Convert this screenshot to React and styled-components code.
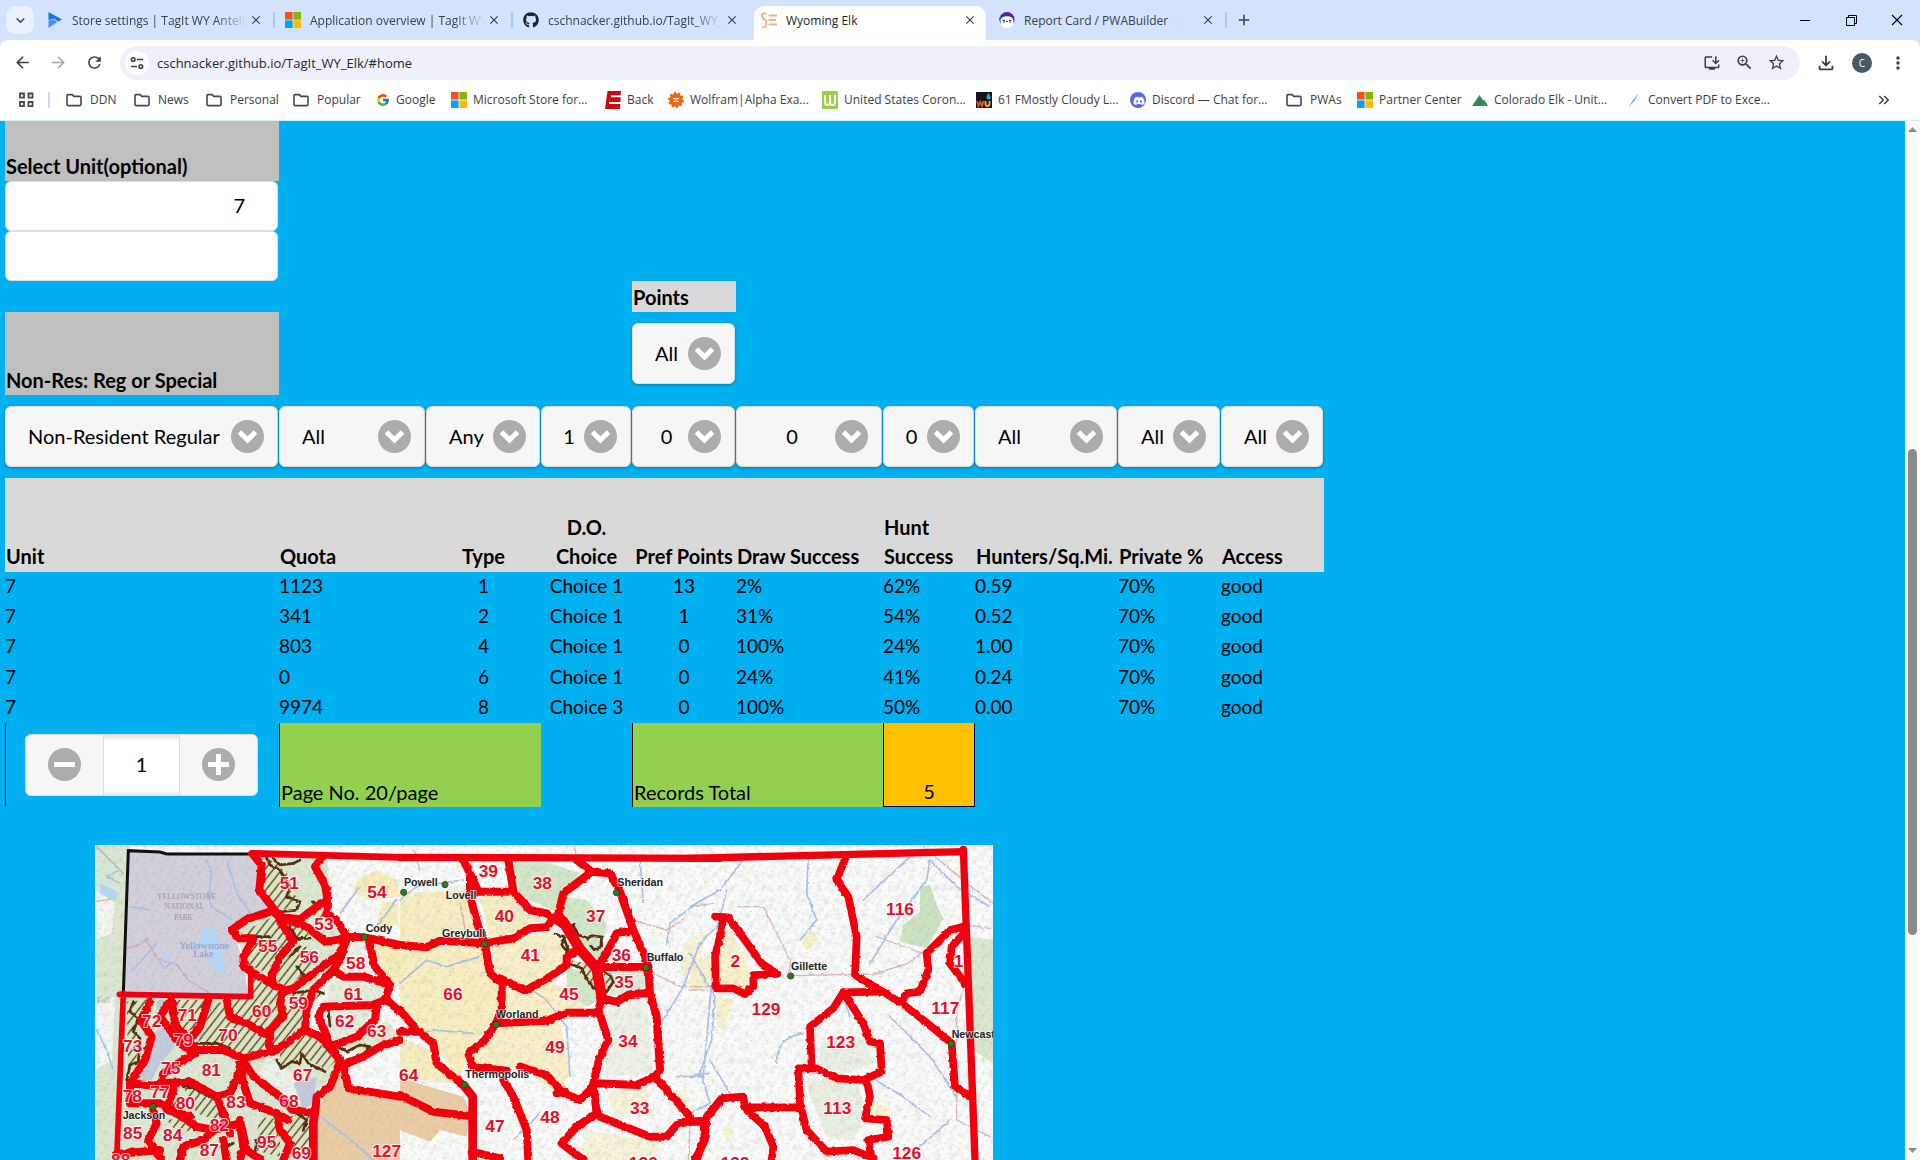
import React from "react";
import styled, { createGlobalStyle, css } from "styled-components";
import { FcGoogle } from "react-icons/fc";
import { FaGithub, FaDiscord } from "react-icons/fa";
import {
    MdArrowBack,
    MdArrowForward,
    MdRefresh,
    MdStarBorder,
    MdZoomIn,
    MdMoreVert,
    MdClose,
    MdAdd,
    MdKeyboardArrowDown,
    MdOutlineInstallDesktop,
    MdKeyboardDoubleArrowRight,
    MdOutlineFileDownload,
} from "react-icons/md";

const GlobalStyle = createGlobalStyle`
    * {
        box-sizing: border-box;
    }
    body {
        margin: 0;
        overflow: hidden;
        background: #00b0f0;
    }
    button, input, select {
        font: inherit;
        color: inherit;
        margin: 0;
    }
`;

const uiFont = `"Open Sans", "Noto Sans", sans-serif`;
const sheetFont = `Lato, "Liberation Sans", sans-serif`;
const columns = [274, 147, 115, 91, 104, 147, 92, 143, 103, 103];
const template = columns.map((c) => `${c}px`).join(" ");

/* ---------- browser window ---------- */

const Window = styled.div`
    display: flex;
    flex-direction: column;
    height: 100vh;
    font-family: ${uiFont};
    font-size: 12px;
    color: #3c4043;
`;

const TabStrip = styled.header`
    display: flex;
    align-items: center;
    flex: none;
    height: 40px;
    padding-left: 6px;
    background: #d3e3fd;
`;

const IconButton = styled.button`
    display: flex;
    align-items: center;
    justify-content: center;
    flex: none;
    width: ${(props) => props.$width || "36px"};
    height: 28px;
    padding: 0;
    border: none;
    border-radius: 10px;
    background: ${(props) => props.$bg || "none"};
    color: ${(props) => props.$color || "#3c4043"};
`;

const TabSearch = styled(IconButton)`
    margin-right: 3px;
`;

const Tab = styled.div`
    position: relative;
    display: flex;
    align-items: center;
    flex: 0 1 238px;
    min-width: 0;
    height: 34px;
    margin-top: 6px;
    padding: 0 ${(props) => (props.$line ? "8px" : "10px")} 6px 10px;
    border-right: ${(props) => (props.$line ? "2px solid #a8c7fa" : "none")};
    border-image: linear-gradient(transparent 20%, #a8c7fa 20%, #a8c7fa 65%, transparent 65%) 1;
    ${(props) =>
        props.$active &&
        css`
            color: #1f1f1f;
            &:before {
                content: "";
                position: absolute;
                z-index: 0;
                inset: 0 3px;
                border-radius: 10px 10px 0 0;
                background: #fff;
            }
        `}
    > * {
        position: relative;
    }
`;

const TabTitle = styled.span`
    flex: 1;
    min-width: 0;
    margin-left: 9px;
    white-space: nowrap;
    mask-image: ${(props) => (props.$fade ? "linear-gradient(90deg, #000 82%, transparent)" : "none")};
`;

const WindowButtons = styled.div`
    display: flex;
    margin-left: auto;
    color: #000;
`;

const Toolbar = styled.div`
    display: flex;
    align-items: center;
    height: 41px;
    padding: 4px 4px 0 4px;
    background: #fff;
    border-radius: 8px 8px 0 0;
`;

const ToolbarBack = styled.div`
    flex: none;
    background: #d3e3fd;
`;

const AddressBar = styled.div`
    display: flex;
    align-items: center;
    flex: 1;
    height: 34px;
    margin: 0 8px;
    padding: 0 8px 0 5px;
    border-radius: 17px;
    background: #ecf1fa;
`;

const SiteInfo = styled(IconButton)`
    height: 24px;
    border-radius: 12px;
`;

const Address = styled.input`
    flex: 1;
    min-width: 0;
    padding: 0 8px;
    border: none;
    outline: none;
    background: none;
    font-size: 13px;
    color: #26282b;
`;

const Avatar = styled.span`
    display: flex;
    align-items: center;
    justify-content: center;
    width: 20px;
    height: 20px;
    border-radius: 50%;
    background: #455a64;
    color: #fff;
    font-size: 10px;
`;

const Bookmarks = styled.nav`
    display: flex;
    align-items: center;
    flex: none;
    height: 40px;
    padding: 0 26px 2px 16px;
    border-bottom: 1px solid #d5eef8;
    background: #fff;
`;

const Divider = styled.span`
    width: 2px;
    height: 16px;
    margin: 0 16px 0 12px;
    background: #c9defb;
`;

const Bookmark = styled.a`
    display: flex;
    align-items: center;
    flex: 0 0 ${(props) => props.$width}px;
    gap: ${(props) => (props.$folder ? "8px" : "6px")};
    color: inherit;
    text-decoration: none;
    white-space: nowrap;
    font-size: 12px;
`;

const More = styled(IconButton)`
    margin-left: auto;
    width: 20px;
`;

/* ---------- sheet ---------- */

const Viewport = styled.main`
    display: flex;
    flex: 1;
    min-height: 0;
    overflow: hidden;
    background: #00b0f0;
`;

const Sheet = styled.form`
    flex: 1;
    min-width: 0;
    overflow: hidden;
    padding-left: 5px;
    font-family: ${sheetFont};
    font-size: 20px;
    line-height: 28px;
    color: #000;
`;

const SheetGrid = styled.div`
    display: grid;
    grid-template-columns: ${template};
`;

const Caption = styled.label`
    display: flex;
    align-items: flex-end;
    grid-column: ${(props) => props.$column || 1};
    height: ${(props) => props.$height};
    padding: 0 0 1px 1px;
    background: ${(props) => props.$bg || "#bfbfbf"};
    font-weight: bold;
`;

const UnitInput = styled.input`
    display: block;
    width: 273px;
    height: 50px;
    padding: 0 32px 3px;
    border: 1px solid #ddd;
    border-radius: 6px;
    background: #fff;
    text-align: right;
`;

const SelectBox = styled.div`
    display: grid;
    align-items: center;
    grid-column: ${(props) => props.$column || "auto"};
    height: 61px;
    margin: 11px 1px 11px 0;
    svg {
        grid-area: 1 / 1;
        justify-self: end;
        margin-right: 14px;
        pointer-events: none;
    }
`;

const SelectInput = styled.select`
    grid-area: 1 / 1;
    width: 100%;
    height: 61px;
    padding: 0 ${(props) => (props.$align === "center" ? "52px" : "40px")} 2px
        ${(props) => (props.$align === "center" ? "18px" : "22px")};
    border: 1px solid #ddd;
    border-radius: 6px;
    background: #f6f6f6;
    box-shadow: 0 1px 3px rgba(0, 0, 0, 0.3);
    appearance: none;
    text-align: ${(props) => props.$align || "left"};
`;

const Records = styled.table`
    width: 1319px;
    table-layout: fixed;
    border-collapse: collapse;
    th {
        height: 94px;
        padding: 0 1px 1px;
        background: #d9d9d9;
        vertical-align: bottom;
        white-space: pre;
        line-height: 29px;
    }
    td {
        height: 30px;
        padding: 0;
        vertical-align: top;
        font-size: 19px;
    }
    tr:nth-child(3) td {
        height: 31px;
    }
`;

const HeadCell = styled.th`
    text-align: ${(props) => props.$align || "left"};
`;

const Cell = styled.td`
    text-align: ${(props) => props.$align || "left"};
`;

const Footer = styled(SheetGrid)`
    height: 84px;
    margin-bottom: 38px;
`;

const FooterCell = styled.div`
    display: flex;
    align-items: flex-end;
    justify-content: ${(props) => (props.$total ? "center" : "flex-start")};
    grid-column: ${(props) => props.$column};
    padding: 0 1px 1px;
    border: 0 solid #000;
    border-width: ${(props) => (props.$total ? "0 1px 1px 1px" : "0 0 0 1px")};
    background: ${(props) => props.$bg || "none"};
`;

const Stepper = styled.div`
    display: flex;
    align-self: center;
    width: 233px;
    height: 62px;
    margin-left: 18px;
    overflow: hidden;
    border: 1px solid #ddd;
    border-radius: 6px;
    background: #f6f6f6;
`;

const StepButton = styled.button`
    display: flex;
    align-items: center;
    justify-content: center;
    flex: 1;
    padding: 0;
    border: none;
    background: none;
`;

const StepInput = styled.input`
    width: 77px;
    padding: 0 0 2px;
    border: 1px solid #ddd;
    border-width: 0 1px;
    background: #fff;
    box-shadow: inset 0 7px 3px -3px #e8e8e8, inset 0 -6px 3px -3px #ececec;
    text-align: center;
`;

const MapFigure = styled.figure`
    width: 898px;
    margin: 0 0 0 90px;
    svg {
        display: block;
        width: 100%;
    }
`;

const ScrollTrack = styled.div`
    display: flex;
    flex-direction: column;
    align-items: center;
    flex: 0 0 15px;
    padding: 6px 0 7px;
    background: #fcfcfc;
`;

const ScrollThumb = styled.div`
    flex: 486;
    width: 9px;
    border-radius: 5px;
    background: #8b8b8b;
`;

const ScrollSpace = styled.div`
    flex: ${(props) => props.$grow};
`;

/* ---------- small icons ---------- */

const Folder = () => (
    <svg width="16" height="16" viewBox="0 0 16 16" fill="none" stroke="#474747" strokeWidth="1.6">
        <path d="M1 3.6q0-1 1-1h4.2l1.7 1.8H14q1 0 1 1v7.2q0 1-1 1H2q-1 0-1-1z" />
    </svg>
);

const Microsoft = () => (
    <svg width="16" height="16" viewBox="0 0 16 16">
        <path d="M0 0h7.6v7.6H0z" fill="#f25022" />
        <path d="M8.4 0H16v7.6H8.4z" fill="#7fba00" />
        <path d="M0 8.4h7.6V16H0z" fill="#00a4ef" />
        <path d="M8.4 8.4H16V16H8.4z" fill="#ffb900" />
    </svg>
);

const StoreIcon = () => (
    <svg width="16" height="16" viewBox="0 0 16 16">
        <path d="M1.5 0 15 7.5 11 9.6 7 6.5 1.5 8.2z" fill="#1f6fe0" />
        <path d="M1.5 8.8 6.8 7.2l3.4 2.9L1.5 16z" fill="#3b94f2" />
    </svg>
);

const ElkIcon = () => (
    <svg width="16" height="16" viewBox="0 0 16 16" stroke="#efb48c" strokeWidth="2" fill="none">
        <path d="M5.5 2Q4 .8 2 1.6T1.3 5t3 3 .7 5-4 1.4" />
        <path d="M7.5 3.5H16M7.5 8H15M7.5 12.5H16" />
    </svg>
);

const PwaIcon = () => (
    <svg width="16" height="16" viewBox="0 0 16 16">
        <circle cx="8" cy="7.5" r="7.5" fill="#5122a5" />
        <path d="M0 8a8 8 0 0 1 2-5l1 8z" fill="#1f6bd8" />
        <path d="M1.6 8Q3 4 8 4.4 13 4 14.4 8q.6 8-6.4 8T1.6 8z" fill="#fff" />
        <path d="M3.5 8.400h2.500M10 8.400h2.500M4 10h2M10 10h2M7 9.400h2" stroke="#35364a" />
    </svg>
);

const BackIcon = () => (
    <svg width="16" height="18" viewBox="0 0 16 18">
        <path d="M2.500 0H16l-1 18H0z" fill="#cc0b10" />
        <path d="M6 5.200h10M4 12h12" stroke="#fff" strokeWidth="2" />
    </svg>
);

const WolframIcon = () => (
    <svg width="16" height="16" viewBox="0 0 16 16">
        <circle cx="8" cy="8" r="6.600" fill="#f3650b" stroke="#f3650b" strokeWidth="2.600" strokeDasharray="2.300 1.800" />
        <circle cx="8" cy="8" r="5.800" fill="#f3650b" />
        <path d="M5 6.600h6M5 9.400h6" stroke="#fff" strokeWidth="1.400" />
    </svg>
);

const WorldIcon = () => (
    <svg width="16" height="18" viewBox="0 0 16 18">
        <rect width="16" height="18" rx="1" fill="#9ccf4c" />
        <path d="M3 4v7q0 3 2.500 3T8 11V4v7q0 3 2.500 3T13 11V4" fill="none" stroke="#fff" strokeWidth="1.800" />
    </svg>
);

const WeatherIcon = () => (
    <svg width="16" height="16" viewBox="0 0 16 16">
        <rect width="16" height="16" fill="#15191d" />
        <path d="m1 9 1.500 5 1.800-4 1.700 4L7.500 9" fill="none" stroke="#e8502a" strokeWidth="1.800" />
        <path d="M9.500 9v3q0 2 2 2t2-2V9" fill="none" stroke="#f7b32b" strokeWidth="1.800" />
        <path d="M12.500 1q2.500 3.500 2 5t-2 1.500-2-1.500 2-5z" fill="#2fa4e8" />
    </svg>
);

const DiscordIcon = () => (
    <svg width="16" height="16" viewBox="0 0 16 16">
        <circle cx="8" cy="8" r="8" fill="#5865f2" />
        <FaDiscord x="3" y="3" width="10" height="10" color="#fff" />
    </svg>
);

const ColoradoIcon = () => (
    <svg width="16" height="16" viewBox="0 0 16 16">
        <path d="M0 14 7.500 3l3.500 5.500L12.500 8 16 14h-2.500l-2-3L13 14z" fill="#2e8b57" />
    </svg>
);

const ConvertIcon = () => (
    <svg width="16" height="16" viewBox="0 0 16 16">
        <path d="M2.500 15.500 6 9.500 12.500.8 9 8z" fill="#3cb9e2" />
    </svg>
);

const AppsIcon = () => (
    <svg width="16" height="16" viewBox="0 0 16 16" fill="none" stroke="#474747" strokeWidth="1.800">
        <path d="M2 1.500h4v4.200H2zM10.500 1.500h4v4.200h-4zM2 10h4v4.200H2zM10.500 10h4v4.200h-4z" />
    </svg>
);

const TuneIcon = () => (
    <svg width="14" height="14" viewBox="0 0 14 14" fill="none" stroke="#3c4043" strokeWidth="1.600">
        <circle cx="3.200" cy="3.500" r="1.800" />
        <path d="M7 3.500h6M1 10.500h6" />
        <circle cx="10.800" cy="10.500" r="1.800" />
    </svg>
);

const MinimizeIcon = () => (
    <svg width="11" height="11" viewBox="0 0 11 11" stroke="#000">
        <path d="M0 5.500h10" />
    </svg>
);

const RestoreIcon = () => (
    <svg width="11" height="11" viewBox="0 0 11 11" fill="none" stroke="#000">
        <path d="M.5 2.500h8v8h-8zM2.500 2.500v-2h8v8h-2" />
    </svg>
);

const CloseIcon = () => (
    <svg width="12" height="12" viewBox="0 0 12 12" stroke="#000" strokeWidth="1.200">
        <path d="m1 1 10 10M11 1 1 11" />
    </svg>
);

const RoundIcon = ({ d }) => (
    <svg width="33" height="33" viewBox="0 0 33 33" fill="none" stroke="#fff" strokeWidth="5">
        <circle cx="16.500" cy="16.500" r="16.500" fill="#acacac" stroke="none" />
        <path d={d} />
    </svg>
);

const ScrollArrow = ({ down }) => (
    <svg width="9" height="5" viewBox="0 0 9 5" fill="#8b8b8b">
        <path d={down ? "M0 0h9L4.500 5z" : "M0 5h9L4.500 0z"} />
    </svg>
);

/* ---------- data ---------- */

const tabs = [
    { title: "Store settings | TagIt WY Antelo", icon: <StoreIcon />, fade: true, line: true },
    { title: "Application overview | TagIt WY", icon: <Microsoft />, fade: true, line: true },
    { title: "cschnacker.github.io/TagIt_WY_", icon: <FaGithub size={16} color="#1f2328" />, fade: true },
    { title: "Wyoming Elk", icon: <ElkIcon />, active: true },
    { title: "Report Card / PWABuilder", icon: <PwaIcon />, line: true },
];

const bookmarks = [
    ["DDN", 68],
    ["News", 72],
    ["Personal", 87],
    ["Popular", 83],
    ["Google", 75, <FcGoogle size={14} />],
    ["Microsoft Store for...", 154, <Microsoft />],
    ["Back", 63, <BackIcon />],
    ["Wolfram|Alpha Exa...", 154, <WolframIcon />],
    ["United States Coron...", 154, <WorldIcon />],
    ["61 FMostly Cloudy L...", 154, <WeatherIcon />],
    ["Discord — Chat for...", 156, <DiscordIcon />],
    ["PWAs", 71],
    ["Partner Center", 115, <Microsoft />],
    ["Colorado Elk - Unit...", 154, <ColoradoIcon />],
    ["Convert PDF to Exce...", 150, <ConvertIcon />],
];

const filters = [
    ["Residency", "Non-Resident Regular"],
    ["Quota", "All"],
    ["Type", "Any"],
    ["D.O. choice", "1", "center"],
    ["Pref points", "0", "center"],
    ["Draw success", "0", "center"],
    ["Hunt success", "0", "center"],
    ["Hunters per square mile", "All"],
    ["Private", "All"],
    ["Access", "All"],
];

const heads = [
    "Unit",
    "Quota",
    "Type",
    "D.O.\nChoice",
    "Pref Points",
    "Draw Success",
    "Hunt\nSuccess",
    "Hunters/Sq.Mi.",
    "Private %",
    "Access",
];

const rows = [
    ["7", "1123", "1", "Choice 1", "13", "2%", "62%", "0.59", "70%", "good"],
    ["7", "341", "2", "Choice 1", "1", "31%", "54%", "0.52", "70%", "good"],
    ["7", "803", "4", "Choice 1", "0", "100%", "24%", "1.00", "70%", "good"],
    ["7", "0", "6", "Choice 1", "0", "24%", "41%", "0.24", "70%", "good"],
    ["7", "9974", "8", "Choice 3", "0", "100%", "50%", "0.00", "70%", "good"],
];

const align = (i) => (i > 1 && i < 5 ? "center" : "left");

/* ---------- hunt area map, three panels: west, middle, east ---------- */

const panels = [-45, 915, 1785];

const land = [
    [
        ["#dbe7d0", "M45 45H145L110 990H45z"],
        ["#f5f6f4", "M45 180l60 40-10 90-50 20zM45 520l60-20-8 190-52 30z"],
        ["#dde8d2", "M525 80H740L760 280 800 320 780 430 700 480 690 590 780 690 700 850V990H110L130 500H510V420L460 300 590 240z"],
        ["#d3cfdb", "M145 65 515 72 545 105 540 180 575 235 460 300 490 400 505 495H130z"],
        ["#f8edbb", "M830 150l60-30 60 30 10 50-90 10-50-20zM880 340l80 10V470l-50-40zM905 215l50 5v60l-70 25z"],
        ["#e8ecdc", "M750 450 920 470 900 520 740 530zM740 540H880L830 620 760 640z"],
        ["#eef0ea", "M800 340 860 335 880 430 770 430zM560 680 680 760 710 800 640 830 540 730z"],
        ["#dfeAd0", "M800 650 920 570 960 620 850 680z"],
        ["#ebcba3", "M780 710 805 780 960 805V990H705L715 830 750 770z"],
        ["#c3c9de", "M215 610l50-20 20 60-50 60-20 40h-40l25-60zM230 510h30v30h-30zM640 760l70-20-10 80-30 20z"],
    ],
    [
        ["#f8eec4", "M0 190 210 180 240 290 255 340 0 350zM240 200 340 190 420 260 400 290 270 330z"],
        ["#f9eec0", "M0 360 255 345 300 450 300 540 200 670 180 750 100 640 0 530zM0 620 90 660 110 700 190 765 0 740z"],
        ["#f9f0c8", "M275 350 440 305 490 330 500 380 470 430 370 480 290 440zM300 460 450 450 560 540 440 570 300 560z"],
        ["#f9f0c8", "M290 590 480 570 510 730 470 790 360 710 220 710 205 670z"],
        ["#d2e7c8", "M325 95 450 100 540 130 480 250 340 190zM490 200 560 210 620 280 600 400 520 360 480 260zM500 410 590 440 600 510 560 530 500 490zM620 540l40 0-5 40-25-5z"],
        ["#e2ebd9", "M340 200 470 270 440 290 360 250zM620 430 740 420 740 480 620 500z"],
        ["#eef2e9", "M600 520 740 510 760 730 620 740z"],
        ["#ebcba3", "M0 745 190 800 210 850 200 920 120 900 90 935 0 900z"],
        ["#f8f3da", "M620 790 740 770 760 860 640 850zM560 900 780 940 760 990H540zM850 340l70-40-20 120-60 20zM820 780l40 0 10 70-30-10z"],
    ],
    [
        ["#f7f1cc", "M0 400 60 380 70 470 0 480zM85 300 120 300 180 420 170 480 90 460zM80 500l50 10-30 90-20-10zM330 330l30-30 30 30-40 30zM100 890l30 0-20 50zM540 820l60 10-10 40-40 0z"],
        ["#cbe3c1", "M690 170l30-5 20 60 20 40-50 90-80-20 10-50 50-40z"],
        ["#dbe8cf", "M830 320l79 10V700l-60-40z"],
        ["#eaf0e4", "M350 740l150 20 30 80-40 90-80-10-50-120zM400 620l120 0 30 80-80 30-90-20z"],
    ],
];

const hatches = [
    ["M560 85 590 100 640 150 620 170 660 210 620 240 580 230 545 170z",
     "M590 255 640 330 575 435 490 400 520 335 480 310z",
     "M620 275 680 285 690 330 640 320zM690 250 730 210 740 280z",
     "M650 350 690 350 700 400 650 450 620 475 585 450 610 380z",
     "M520 430 610 480 600 550 570 610 460 570 440 510 510 505z",
     "M270 510H380L355 590 310 610 280 560zM400 520 440 515 450 560 570 620 575 660 480 680 350 650 370 590z",
     "M640 485 730 490 690 520 680 590 580 660 570 610 610 560z",
     "M600 660 680 600 770 690 740 720 670 680 600 710z",
     "M140 515 200 510 170 570 170 700 145 720z",
     "M310 770 410 800 440 880 350 850zM250 800 310 800 280 830zM260 870 330 860 360 900 290 905z",
     "M620 860 690 850 690 950 640 980 620 930zM540 860 600 870 600 980 520 960z"],
    ["M510 390 560 400 600 450 600 480 570 470zM490 310 540 320 520 350zM610 430 640 440 620 480z"],
    [],
];

const ridges = [
    "M560 85l10 20 30 15 30 50-10 30 40 15-10 25-40 5M580 85l20 20 40-5 20-10M510 320l60 0M630 290l20 35 40 0M660 350l-30 30M650 410l20 25-15 25M700 215l20 20M590 690l15 25 30-20 25 5 5-30 20 30 50 25M160 515l-10 30 25 20-15 40 20 20-5 70-25 10-10 45M770 650l30 15 40-20 30 5-20 25-50 15M640 490l60-10 30 10M350 640l60 0 40 15M310 770l30 5 60 30M650 850l30 20-10 30M460 940l-20 10M530 930l-5 40 20 10M745 540l5 50",
    "M465 312l30 8-10 25 25 30-5 25 40 15 15 30 20 30 25-5M500 290l20-5 15 30 30 10 10-8 30 4-3 30-20 8-10-12M575 410l55 25 10 20-20 30-20-6M490 320l15 40",
    "",
];

const rivers = [
    ["M380 90l15 40-10 70 10 30 60 40M440 90l30 100 50 70M150 230l60 10M60 60l60 60-40 20 40 20M50 600l30 60 20 60M160 420l70-80M260 370l-20 30 15 15 20-20M720 860l80 60 80 70M400 350l5 60M780 250l60-80M890 290l60-80"],
    ["M0 460l80-70 60 20 100-30M20 620l80-20 120 10M0 210l50-40 140-20M380 470l60 40 60 80 10 150M790 570l60-100 50-130 60-60M960 250l-20 150-30 340-80 0M720 90l10 130M800 340l10-60 80-60M900 720l30 100-60 30M420 850l-80 80"],
    ["M160 90l-70 90-90 50M355 80l-5 110 30 80-50 60M110 180l-20 80M0 370l75 130-10 130-40 110M720 90l-10 60-90 120-80 130M660 80l-140 130M720 90l80 80 100 60M480 560l-20-60M600 560l120 120 80 120M260 700q0-80 80-90M0 740l60-10M60 690l60 100M540 740l100 60 80 60M780 870l-90 80"],
];

const roads = [
    "M45 215l60-10M140 355l40-10 20-20 30 60 60 20 40 50 70 40M50 50l80 80",
    "M40 60l20 60M700 270l100 30 50-30M740 420l100 50 90 0M870 880l-5 110M520 50l30 60M180 220l20 100",
    "M0 480l40 0M140 230l80 0 30 60 50 100 0 45M300 437l250-5 100-30 80-60M830 285l70 10M700 50l130 110 79 60M800 640l0-100 20-60M0 230l70-10M800 780l0 90 100 50M560 320l80 30 60 20",
];

const borders = [
    [
        [20, "M515 70 960 82"],
        [17, "M118 493 512 500V415M130 490 110 990"],
        [24, "M520 75 545 105 538 180 580 235 600 262 M725 85 705 110 735 165 742 205 690 245 660 268 600 262 M600 252 570 245 500 268 455 300 475 325 520 325 M520 328 490 380 492 412 580 465 615 480 M742 180 740 250 770 270 800 320 853 322 960 345 M600 262 680 290 735 335 800 325 M590 255 640 335 600 380 575 440 580 465"],
        [24, "M800 325 780 370 700 430 640 475 610 485 M800 325 780 390 760 420 790 440 850 440 930 465 M865 325 885 410 930 465 915 510 880 525 730 530 715 560 750 640 780 690 M760 420 740 440 700 480 680 540 675 598 620 640 575 665 M890 530 885 570 830 620 765 645 M915 505 960 545 M960 630 900 650 850 680 790 705 M610 485 600 520 610 560 570 600 565 640 580 665"],
        [24, "M440 510 450 560 500 580 570 620 M385 510 360 590 330 630 M275 505 285 580 320 625 M330 640 350 660 430 660 490 685 570 665 M210 515 183 570 215 620 195 690 150 760 M265 520 240 560 300 640 345 670 310 690 250 730 245 760 M250 760 330 755 410 800 450 790 485 710 M485 685 520 740 600 800 640 840 705 850 710 800 750 770 780 695 M675 600 720 620 780 690"],
        [24, "M480 700 490 760 510 820 590 850 625 870 M410 800 430 850 450 910 M150 760 250 770 290 760 M150 760 150 820 240 820 290 850 350 890 400 900 480 880 490 950 480 990 M280 780 260 840 330 860 M220 840 230 880 205 930 245 990 M110 972 240 960 M300 990 310 950 370 930 400 900 M430 930 440 990 M590 850 600 900 630 940 610 990 M480 870 500 960 540 990 M790 705 805 775 960 800"],
        [26, "M705 840 700 880 700 990"],
    ],
    [
        [22, "M0 82 960 85"],
        [24, "M190 90 215 140 235 185 340 185 325 90 M210 140 210 200 235 290 255 340 M340 185 390 240 440 250 490 285 M255 340 340 325 390 295 440 292 460 265 M300 445 375 482 450 440 500 405 500 380 540 358 M530 90 575 125 490 190 475 250 500 290 M575 125 630 130 660 185 700 300 735 380 745 410 M700 300 650 310 620 370 600 400 M605 412 740 410"],
        [32, "M490 275 540 358 590 415 605 500"],
        [24, "M0 345 80 352 120 332 255 340 270 430 305 460 305 540 288 580 M745 410 750 490 690 492 650 515 600 505 M288 580 440 572 500 548 595 548 M605 505 595 540 625 630 600 680 580 760 590 850 M750 490 770 560 780 720 765 740 710 765 590 760"],
        [24, "M288 580 255 630 205 670 220 712 320 722 M360 710 440 735 490 790 540 810 580 770 M470 790 495 785 M0 540 50 600 100 640 110 700 190 765 M0 605 60 605 M0 795 100 845 210 858 M310 750 340 800 380 900 385 990 M215 965 300 985 M765 740 870 860 870 872 830 885 800 920 750 920 600 860 590 840 M590 850 530 890 485 940 550 990 M870 875 910 875 960 812 M910 875 915 930 885 990"],
        [26, "M190 765 218 800 218 990"],
    ],
    [
        [22, "M0 85 820 65"],
        [22, "M820 58 855 990"],
        [23, "M75 260 115 262 215 400 262 432 190 435 190 470 165 492 130 475 78 475 75 380 95 300 100 262 M470 75 440 150 475 200 500 320 495 435 570 480 635 520 700 570 785 640 795 770 840 800 M460 487 570 485 M635 515 650 490 690 485 715 420 710 370 780 300 820 290 M820 312 785 350 780 400 825 460"],
        [23, "M460 487 430 535 360 590 365 715 M460 487 520 580 540 635 570 640 575 725 520 750 440 745 380 715 325 715 330 820 350 900 410 965 490 960 550 985 M530 750 540 800 525 865 590 870 595 920 535 930 545 985 M170 832 335 832 M160 800 95 805 50 860 45 920 20 990 M0 875 45 872 M160 800 165 835 225 890 250 950 245 990"],
    ],
];

const areas = [
    [[51, 628, 178], [54, 891, 205], [53, 732, 300], [55, 563, 367], [56, 688, 398], [58, 827, 416], [61, 820, 511],
     [60, 545, 560], [59, 655, 537], [62, 794, 592], [63, 890, 621], [71, 322, 572], [72, 215, 590], [70, 444, 632],
     [73, 158, 667], [79, 310, 648], [75, 272, 731], [81, 394, 738], [67, 668, 753], [78, 157, 815], [77, 240, 805],
     [80, 316, 838], [83, 468, 834], [68, 627, 832], [82, 418, 902], [85, 158, 928], [84, 278, 932], [87, 388, 978],
     [95, 560, 954], [69, 664, 986], [88, 122, 1008], [127, 920, 980]],
    [[39, 265, 140], [38, 427, 178], [40, 313, 277], [37, 587, 276], [41, 391, 393], [36, 664, 392], [35, 672, 475],
     [66, 159, 511], [45, 507, 511], [34, 684, 650], [49, 465, 668], [64, 26, 754], [33, 719, 852], [48, 450, 879],
     [47, 285, 906], [120, 730, 1018]],
    [[116, 630, 254], [2, 136, 412], [1, 806, 411], [129, 228, 556], [117, 766, 551], [123, 452, 654], [113, 442, 851],
     [126, 650, 986], [122, 135, 1018]],
];

const towns = [
    [["Cody", 857, 306, 854, 321], ["Jackson", 128, 866, 219, 830]],
    [["Powell", 12, 169, 11, 187], ["Lovell", 137, 206, 135, 164], ["Sheridan", 652, 169, 649, 188],
     ["Greybull", 126, 322, 254, 341], ["Buffalo", 740, 394, 738, 413], ["Worland", 288, 565, 288, 584],
     ["Thermopolis", 196, 745, 194, 764]],
    [["Gillette", 303, 421, 302, 438], ["Newcast", 785, 624, 783, 642]],
];

const places = [
    ["YELLOWSTONE", 230, 208, 24, "#9795a2"],
    ["NATIONAL", 252, 238, 24, "#9795a2"],
    ["PARK", 282, 270, 22, "#9795a2"],
    ["Yellowstone", 298, 358, 30, "#7f9ccb"],
    ["Lake", 340, 382, 30, "#7f9ccb"],
    ["Fall", 50, 520, 26, "#aaa"],
];

const HuntMap = () => (
    <svg viewBox="0 0 2694 960" role="img" aria-label="Wyoming elk hunt areas">
        <defs>
            <pattern id="hatch" width="20" height="20" patternUnits="userSpaceOnUse" patternTransform="rotate(38)">
                <rect width="20" height="20" fill="#dbe5c4" />
                <path d="M10 0V20" stroke="#55391b" strokeWidth="4" />
            </pattern>
            <pattern id="dots" width="47" height="43" patternUnits="userSpaceOnUse">
                <path d="M5 8h4M28 4h4M18 22h4M40 27h4M9 36h4M31 39h4" stroke="#8f9a86" strokeOpacity=".4" strokeWidth="3" />
            </pattern>
            <filter id="terrain" x="0" y="0" width="100%" height="100%">
                <feTurbulence type="fractalNoise" baseFrequency=".05" numOctaves="4" seed="5" />
                <feColorMatrix values="0 0 0 0 .5  0 0 0 0 .55  0 0 0 0 .45  1.6 0 0 0 -.72" />
            </filter>
            <filter id="rough" x="-2%" y="-2%" width="104%" height="104%">
                <feTurbulence type="fractalNoise" baseFrequency=".08" numOctaves="1" seed="3" />
                <feDisplacementMap in="SourceGraphic" scale="10" xChannelSelector="R" yChannelSelector="G" />
            </filter>
        </defs>
        <rect width="2694" height="960" fill="#f9faf9" />
        {panels.map((x, i) => (
            <g key={i} transform={`translate(${x} -45)`} fill="none">
                {land[i].map(([fill, d]) => (
                    <path key={d} d={d} fill={fill} />
                ))}
            </g>
        ))}
        <rect width="2694" height="960" filter="url(#terrain)" opacity=".45" />
        <rect width="2694" height="960" fill="url(#dots)" />
        {panels.map((x, i) => (
            <g key={i} transform={`translate(${x} -45)`} fill="none" strokeLinecap="round" strokeLinejoin="round">
                <g filter="url(#rough)">
                    <path d={roads[i]} stroke="#c99d9d" strokeWidth="4" opacity=".7" />
                    <path d={rivers[i].join("")} stroke="#a9bfe3" strokeWidth="5" />
                </g>
                {hatches[i].map((d) => (
                    <path key={d} d={d} fill="url(#hatch)" />
                ))}
                <path d={ridges[i]} stroke="#55300f" strokeWidth="8" filter="url(#rough)" />
            </g>
        ))}
        <g transform="translate(-45 -45)">
            <path d="M365 300l25-12 20 15 5 45 15 30 5 40-15 10-30-20-5-50-30-20zM245 375l25-15 0 20-20 15zM60 160l60 30-20 20-40-20z" fill="#b4d6f4" />
            <path d="M130 490 145 62 240 66 260 72 515 72" fill="none" stroke="#111" strokeWidth="9" />
            {places.map(([name, x, y, size, fill]) => (
                <text key={name} x={x} y={y} fontSize={size} fill={fill} fontFamily="Liberation Serif, serif">
                    {name}
                </text>
            ))}
        </g>
        {panels.map((x, i) => (
            <g key={i} transform={`translate(${x} -45)`} fill="none" strokeLinecap="round" strokeLinejoin="round">
                {borders[i].map(([width, d]) => (
                    <path key={d} d={d} stroke="#f0000f" strokeWidth={width} filter={d.length > 40 ? "url(#rough)" : undefined} />
                ))}
            </g>
        ))}
        {panels.map((x, i) => (
            <g key={i} transform={`translate(${x} -45)`} fontFamily="Liberation Sans, sans-serif" fontWeight="bold" paintOrder="stroke">
                {areas[i].map(([name, ax, ay]) => (
                    <text key={name} x={ax} y={ay} fontSize="52" textAnchor="middle" fill="#e3102c" stroke="#fff" strokeOpacity=".75" strokeWidth="6">
                        {name}
                    </text>
                ))}
                {towns[i].map(([name, tx, ty, cx, cy]) => (
                    <g key={name}>
                        <circle cx={cx} cy={cy} r="9" fill="#2c7a1f" stroke="#111" strokeWidth="3" />
                        <text x={tx} y={ty} fontSize="32" fill="#222" stroke="#fff" strokeOpacity=".7" strokeWidth="5">
                            {name}
                        </text>
                    </g>
                ))}
            </g>
        ))}
    </svg>
);

const Dropdown = ({ label, value, align, column }) => (
    <SelectBox $column={column}>
        <SelectInput aria-label={label} $align={align} defaultValue={value}>
            <option>{value}</option>
        </SelectInput>
        <RoundIcon d="m8.500 12 8 8 8-8" />
    </SelectBox>
);

const Chrome = () => (
    <>
        <TabStrip>
            <TabSearch type="button" $width="28px" $bg="#e9f1fe" aria-label="Search tabs">
                <MdKeyboardArrowDown size={17} />
            </TabSearch>
            {tabs.map((tab) => (
                <Tab key={tab.title} $active={tab.active} $line={tab.line}>
                    {tab.icon}
                    <TabTitle $fade={tab.fade}>{tab.title}</TabTitle>
                    <IconButton type="button" $width="18px" aria-label="Close tab">
                        <MdClose size={14} />
                    </IconButton>
                </Tab>
            ))}
            <IconButton type="button" $width="34px" aria-label="New tab">
                <MdAdd size={18} />
            </IconButton>
            <WindowButtons>
                <IconButton type="button" $width="46px" aria-label="Minimize">
                    <MinimizeIcon />
                </IconButton>
                <IconButton type="button" $width="46px" aria-label="Restore">
                    <RestoreIcon />
                </IconButton>
                <IconButton type="button" $width="46px" aria-label="Close">
                    <CloseIcon />
                </IconButton>
            </WindowButtons>
        </TabStrip>
        <ToolbarBack>
            <Toolbar>
                <IconButton type="button" aria-label="Back">
                    <MdArrowBack size={19} />
                </IconButton>
                <IconButton type="button" $color="#a5a7aa" aria-label="Forward">
                    <MdArrowForward size={19} />
                </IconButton>
                <IconButton type="button" aria-label="Reload">
                    <MdRefresh size={19} />
                </IconButton>
                <AddressBar>
                    <SiteInfo type="button" $width="24px" $bg="#fff" aria-label="Site information">
                        <TuneIcon />
                    </SiteInfo>
                    <Address aria-label="Address" defaultValue="cschnacker.github.io/TagIt_WY_Elk/#home" />
                    <IconButton type="button" $width="32px" aria-label="Install app">
                        <MdOutlineInstallDesktop size={18} />
                    </IconButton>
                    <IconButton type="button" $width="32px" aria-label="Zoom">
                        <MdZoomIn size={19} />
                    </IconButton>
                    <IconButton type="button" $width="32px" aria-label="Bookmark this page">
                        <MdStarBorder size={19} />
                    </IconButton>
                </AddressBar>
                <IconButton type="button" aria-label="Downloads">
                    <MdOutlineFileDownload size={22} />
                </IconButton>
                <IconButton type="button" aria-label="Profile">
                    <Avatar>C</Avatar>
                </IconButton>
                <IconButton type="button" aria-label="Menu">
                    <MdMoreVert size={20} />
                </IconButton>
            </Toolbar>
        </ToolbarBack>
        <Bookmarks>
            <IconButton type="button" $width="20px" aria-label="Apps">
                <AppsIcon />
            </IconButton>
            <Divider />
            {bookmarks.map(([name, width, icon]) => (
                <Bookmark key={name} href="#home" $width={width} $folder={!icon}>
                    {icon || <Folder />}
                    {name}
                </Bookmark>
            ))}
            <More type="button" aria-label="More bookmarks">
                <MdKeyboardDoubleArrowRight size={18} />
            </More>
        </Bookmarks>
    </>
);

export default function App() {
    return (
        <Window>
            <GlobalStyle />
            <Chrome />
            <Viewport>
                <Sheet>
                    <SheetGrid>
                        <Caption htmlFor="unit" $height="60px">
                            Select Unit(optional)
                        </Caption>
                    </SheetGrid>
                    <UnitInput id="unit" defaultValue="7" />
                    <UnitInput aria-label="Second unit" />
                    <SheetGrid>
                        <Caption as="div" $column={5} $height="31px" $bg="#d9d9d9">
                            Points
                        </Caption>
                    </SheetGrid>
                    <SheetGrid>
                        <Caption as="div" $height="83px">
                            Non-Res: Reg or Special
                        </Caption>
                        <Dropdown label="Points" value="All" column={5} />
                    </SheetGrid>
                    <SheetGrid>
                        {filters.map(([label, value, side]) => (
                            <Dropdown key={label} label={label} value={value} align={side} />
                        ))}
                    </SheetGrid>
                    <Records>
                        <colgroup>
                            {columns.map((width, i) => (
                                <col key={i} style={{ width }} />
                            ))}
                        </colgroup>
                        <thead>
                            <tr>
                                {heads.map((head, i) => (
                                    <HeadCell key={head} $align={align(i)}>
                                        {head}
                                    </HeadCell>
                                ))}
                            </tr>
                        </thead>
                        <tbody>
                            {rows.map((row) => (
                                <tr key={row[1]}>
                                    {row.map((value, i) => (
                                        <Cell key={i} $align={align(i)}>
                                            {value}
                                        </Cell>
                                    ))}
                                </tr>
                            ))}
                        </tbody>
                    </Records>
                    <Footer>
                        <FooterCell $column="1">
                            <Stepper>
                                <StepButton type="button" aria-label="Previous page">
                                    <RoundIcon d="M6 16.500h21" />
                                </StepButton>
                                <StepInput aria-label="Page number" defaultValue="1" />
                                <StepButton type="button" aria-label="Next page">
                                    <RoundIcon d="M6 16.500h21M16.500 6v21" />
                                </StepButton>
                            </Stepper>
                        </FooterCell>
                        <FooterCell $column="2 / 4" $bg="#92d050">
                            Page No. 20/page
                        </FooterCell>
                        <FooterCell $column="5 / 7" $bg="#92d050">
                            Records Total
                        </FooterCell>
                        <FooterCell $column="7" $bg="#ffc000" $total>
                            5
                        </FooterCell>
                    </Footer>
                    <MapFigure>
                        <HuntMap />
                    </MapFigure>
                </Sheet>
                <ScrollTrack>
                    <ScrollArrow />
                    <ScrollSpace $grow={317} />
                    <ScrollThumb />
                    <ScrollSpace $grow={213} />
                    <ScrollArrow down />
                </ScrollTrack>
            </Viewport>
        </Window>
    );
}
